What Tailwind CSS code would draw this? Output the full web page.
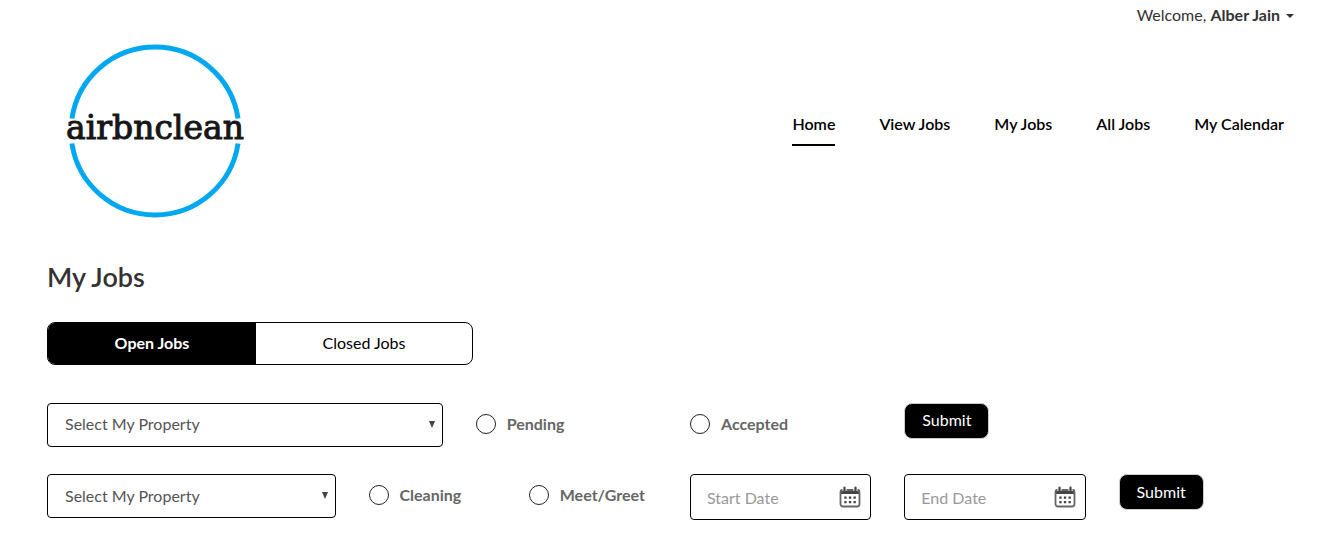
<!DOCTYPE html>
<html lang="en">
<head>
<meta charset="utf-8">
<meta name="viewport" content="width=device-width, initial-scale=1">
<title>airbnclean - My Jobs</title>
<script src="https://cdn.jsdelivr.net/npm/@tailwindcss/browser@4"></script>
</head>
<body class="bg-white font-['Lato',sans-serif] text-base text-[#333]">
<svg class="hidden" aria-hidden="true">
  <symbol id="calendar" viewBox="0 0 22 22">
    <path d="M1 5.500a2.500 2.500 0 0 1 2.500-2.500h15a2.500 2.500 0 0 1 2.500 2.500v2.500h-20z" fill="#444"/>
    <rect x="1.500" y="4" width="19" height="16.500" rx="2.500" fill="none" stroke="#666" stroke-width="1.800"/>
    <path d="M5.500 1v4M16.500 1v4" stroke="#fff" stroke-width="4"/>
    <path d="M5.500 1.500v3.500M16.500 1.500v3.500" stroke="#444" stroke-width="2.200" stroke-linecap="round"/>
    <path d="M5.300 10.400h2.300v2.300h-2.300zM9.900 10.400h2.300v2.300h-2.300zM14.500 10.400h2.300v2.300h-2.300zM5.300 14.900h2.300v2.300h-2.300zM9.900 14.900h2.300v2.300h-2.300zM14.500 14.900h2.300v2.300h-2.300z" fill="#444"/>
  </symbol>
</svg>

<header class="pr-10 pl-15">
  <div class="flex h-[30px] items-center justify-end">
    <button type="button" class="flex items-center gap-1.5">
      <span>Welcome, <b class="font-bold">Alber Jain</b></span>
      <svg class="mt-0.5 h-1 w-2" viewBox="0 0 8 4" fill="#333" aria-hidden="true"><path d="M0 0h8L4 4z"/></svg>
    </button>
  </div>
  <div class="flex items-center justify-between">
    <a href="#" aria-label="airbnclean home">
      <svg class="h-[198px] w-[190px]" viewBox="0 0 190 198" aria-hidden="true">
        <path d="M11.940 88.500A84 84 0 0 1 178.060 88.500M11.940 113.500A84 84 0 0 0 178.060 113.500" fill="none" stroke="#00a8f0" stroke-width="5"/>
        <text x="95" y="109" text-anchor="middle" font-family="DejaVu Serif, serif" font-size="33" fill="#161616" stroke="#161616" stroke-width="1">airbnclean</text>
      </svg>
    </a>
    <nav class="mr-2.5 flex gap-11 font-semibold text-black">
      <a href="#" aria-current="page" class="border-b-2 border-black pb-2">Home</a>
      <a href="#" class="pb-2.5">View Jobs</a>
      <a href="#" class="pb-2.5">My Jobs</a>
      <a href="#" class="pb-2.5">All Jobs</a>
      <a href="#" class="pb-2.5">My Calendar</a>
    </nav>
  </div>
</header>

<main class="pt-[31px] pr-[34px] pb-6 pl-[47px]">
  <h1 class="text-[27px] leading-9 font-semibold">My Jobs</h1>

  <div class="mt-[27px] flex h-[43px] max-w-[426px] overflow-hidden rounded-lg border border-black text-black">
    <button type="button" class="w-[208px] bg-black pb-0.5 font-bold text-white">Open Jobs</button>
    <button type="button" class="flex-1 pb-0.5">Closed Jobs</button>
  </div>

  <form class="mt-[38px] grid grid-cols-12 gap-x-[33px]">
    <div class="relative col-span-4">
      <select aria-label="Property" class="h-11 w-full appearance-none rounded border border-black px-[17px] pb-0.5 text-[#555]"><option>Select My Property</option></select>
      <svg class="pointer-events-none absolute top-[18px] right-2 h-[7px] w-[6px]" viewBox="0 0 6 7" fill="#444" aria-hidden="true"><path d="M0 0h6L3 7z"/></svg>
    </div>
    <label class="col-span-2 flex h-[42px] items-center gap-[11px] font-bold text-[#666]"><input type="radio" name="status" class="size-5 shrink-0 appearance-none rounded-full border border-[#222] checked:border-[6px]">Pending</label>
    <label class="col-span-2 flex h-[42px] items-center gap-[11px] font-bold text-[#666]"><input type="radio" name="status" class="size-5 shrink-0 appearance-none rounded-full border border-[#222] checked:border-[6px]">Accepted</label>
    <div class="col-span-4"><button type="submit" class="h-9 w-[85px] rounded-lg border border-[#ccc] bg-black pb-0.5 text-white">Submit</button></div>
  </form>

  <form class="mt-[27px] grid grid-cols-12 gap-x-[33px]">
    <div class="relative col-span-3">
      <select aria-label="Property" class="h-11 w-full appearance-none rounded border border-black px-[17px] text-[#555]"><option>Select My Property</option></select>
      <svg class="pointer-events-none absolute top-[18px] right-2 h-[7px] w-[6px]" viewBox="0 0 6 7" fill="#444" aria-hidden="true"><path d="M0 0h6L3 7z"/></svg>
    </div>
    <div class="col-span-3 grid grid-cols-2">
      <label class="flex h-[42px] items-center gap-[11px] font-bold text-[#666]"><input type="radio" name="kind" class="size-5 shrink-0 appearance-none rounded-full border border-[#222] checked:border-[6px]">Cleaning</label>
      <label class="flex h-[42px] items-center gap-[11px] pl-4 font-bold text-[#666]"><input type="radio" name="kind" class="size-5 shrink-0 appearance-none rounded-full border border-[#222] checked:border-[6px]">Meet/Greet</label>
    </div>
    <div class="relative col-span-2">
      <input type="text" aria-label="Start Date" placeholder="Start Date" class="h-[46px] w-full rounded border border-black pr-10 pl-4 placeholder:text-[#999]">
      <svg class="pointer-events-none absolute top-3 right-2.5 size-[22px]" aria-hidden="true"><use href="#calendar"/></svg>
    </div>
    <div class="relative col-span-2">
      <input type="text" aria-label="End Date" placeholder="End Date" class="h-[46px] w-full rounded border border-black pr-10 pl-4 placeholder:text-[#999]">
      <svg class="pointer-events-none absolute top-3 right-2.5 size-[22px]" aria-hidden="true"><use href="#calendar"/></svg>
    </div>
    <div class="col-span-2"><button type="submit" class="h-9 w-[85px] rounded-lg border border-[#ccc] bg-black text-white">Submit</button></div>
  </form>
</main>
</body>
</html>
